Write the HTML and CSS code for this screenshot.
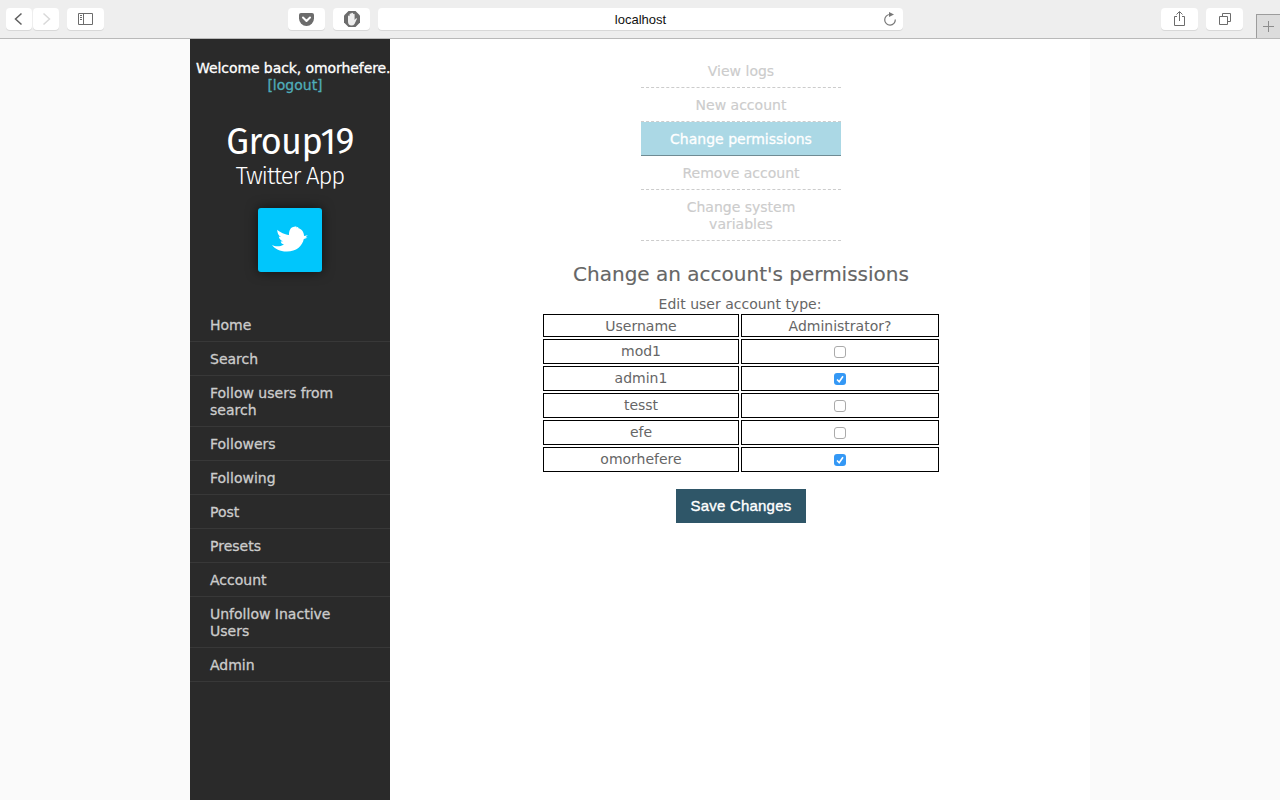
FILE: index.html
```html
<!DOCTYPE html>
<html lang="en">
<head>
<meta charset="utf-8">
<title>Group19 Twitter App</title>
<link rel="stylesheet" href="styles.css">
</head>
<body>
<header class="toolbar">
  <div class="btn nav"><svg width="26" height="22" viewBox="0 0 26 22"><path d="M15.500 5.500 9.500 11l6 5.500" fill="none" stroke="#5f5f5f" stroke-width="1.500"/></svg></div>
  <div class="btn nav forward"><svg width="26" height="22" viewBox="0 0 26 22"><path d="M10.500 5.500l6 5.500-6 5.500" fill="none" stroke="#d9d9d9" stroke-width="1.500"/></svg></div>
  <div class="btn side"><svg width="37" height="22" viewBox="0 0 37 22"><path d="M11.500 5.500h14v11h-14zM16.500 5.500v11M13 7.500h2M13 9.500h2M13 11.500h2" fill="none" stroke="#6c6c6c"/></svg></div>
  <div class="btn pocket"><svg width="37" height="22" viewBox="0 0 37 22"><path d="M13 5h11q2 0 2 2v3.500a7.500 7.500 0 0 1-15 0V7q0-2 2-2z" fill="#6c6c6c"/><path d="M15 9.500l3.500 3.500 3.500-3.500" fill="none" stroke="#fff" stroke-width="2" stroke-linecap="round" stroke-linejoin="round"/></svg></div>
  <div class="btn block"><svg width="37" height="22" viewBox="0 0 37 22"><path d="M15.500 3h7l4.500 4.500v7L22.500 19h-7L11 14.500v-7z" fill="#6c6c6c"/><path d="M15 8.500q0-1 .8-1t.8 1V6.300q0-.8.800-.8t.8.800V5.500q0-.8.900-.8t.9.800V6.500q0-.8.800-.8t.8.800V12l1.200-1.500q1-.8 1.200.2L21.500 16q-1 1.500-3 1.500-3.500 0-3.500-4z" fill="#eee"/></svg></div>
  <div class="address"><span>localhost</span><svg class="reload" width="14" height="14" viewBox="0 0 14 14"><path d="M7 2.500A5.300 5.300 0 1 0 12.300 7.500" fill="none" stroke="#777" stroke-width="1.200"/><path d="M6 0l5 2.600L6 5z" fill="#777"/></svg></div>
  <div class="btn share"><svg width="37" height="22" viewBox="0 0 37 22"><path d="M16 8.500h-2.500v9h10v-9H21M18.500 13V4M15.500 6.500l3-3 3 3" fill="none" stroke="#6c6c6c"/></svg></div>
  <div class="btn tabs"><svg width="37" height="22" viewBox="0 0 37 22"><path d="M13.500 8.500h8v8h-8zM16.500 8V5.500h8v8H22" fill="none" stroke="#6c6c6c"/></svg></div>
  <div class="newtab"><svg width="23" height="23" viewBox="0 0 23 23"><path d="M6 11.500h11M11.500 6v11" stroke="#8c8c8c"/></svg></div>
</header>
<div class="page">
  <aside class="sidebar">
    <p class="welcome"><span class="greeting">Welcome back, omorhefere.</span><a class="logout">[logout]</a></p>
    <h1 class="brand"><span class="brand-name">Group19</span><span class="brand-sub">Twitter App</span></h1>
    <div class="logo"><svg width="36" height="28" viewBox="0 0 36 28"><path d="M0 19C3 20.700 8 21 12 18.500 10 18 9 17 8.700 15.500L11 15.300C8.500 14.500 7 12.500 6.800 10.500L9 11C6.500 9.500 5 6.500 5.300 3.700 9 7 12 8 17 9 17 5 18 2 21 1L24.500.2 24 1.300 26.500 1 26 2C30 3 32 6.500 32 10L35.800 9.300 33.500 11.300 35.500 11.700 31.800 13C30.500 20 24 25.800 14.500 25.600 8 25.500 3 23 0 19z" fill="#fff"/></svg></div>
    <nav class="menu">
      <a><span>Home</span></a>
      <a><span>Search</span></a>
      <a><span>Follow users from<br>search</span></a>
      <a><span>Followers</span></a>
      <a><span>Following</span></a>
      <a><span>Post</span></a>
      <a><span>Presets</span></a>
      <a><span>Account</span></a>
      <a><span>Unfollow Inactive<br>Users</span></a>
      <a><span>Admin</span></a>
    </nav>
  </aside>
  <main class="content">
    <nav class="submenu">
      <a>View logs</a>
      <a>New account</a>
      <a class="active">Change permissions</a>
      <a>Remove account</a>
      <a>Change system<br>variables</a>
    </nav>
    <h2 class="title">Change an account's permissions</h2>
    <p class="caption">Edit user account type:</p>
    <div class="users">
      <div class="head">Username</div><div class="head">Administrator?</div>
      <div class="cell">mod1</div><div class="cell"><i class="check"></i></div>
      <div class="cell">admin1</div><div class="cell"><i class="check on"><svg width="12" height="12" viewBox="0 0 12 12"><path d="M3 6.500l2.200 2.300L9 3.200" fill="none" stroke="#fff" stroke-width="1.600"/></svg></i></div>
      <div class="cell">tesst</div><div class="cell"><i class="check"></i></div>
      <div class="cell">efe</div><div class="cell"><i class="check"></i></div>
      <div class="cell">omorhefere</div><div class="cell"><i class="check on"><svg width="12" height="12" viewBox="0 0 12 12"><path d="M3 6.500l2.200 2.300L9 3.200" fill="none" stroke="#fff" stroke-width="1.600"/></svg></i></div>
    </div>
    <button class="save">Save Changes</button>
  </main>
</div>
</body>
</html>
```
FILE: styles.css
```css
* { box-sizing: border-box; }
body { margin: 0; height: 800px; overflow: hidden; background: #fafafa; color: #666; font: 14px/17px Verdana, "DejaVu Sans", sans-serif; }
svg { display: block; }
.toolbar { display: flex; align-items: flex-start; height: 39px; padding: 8px 0 0 6px; background: #eee; border-bottom: 1px solid #b9b9b9; }
.btn { flex: none; width: 37px; height: 22px; background: #fff; border-radius: 4px; box-shadow: 0 1px 0 #d8d8d8; }
.nav { width: 26px; }
.forward { margin-left: 1px; }
.side { margin-left: 8px; }
.pocket { margin-left: 184px; }
.block { margin-left: 8px; }
.address { position: relative; width: 525px; height: 22px; margin-left: 8px; background: #fff; border-radius: 4px; box-shadow: 0 1px 0 #d8d8d8; text-align: center; color: #111; font: 13px/23px "Liberation Sans", Arial, sans-serif; }
.reload { position: absolute; right: 6px; top: 4px; }
.share { margin-left: 258px; }
.tabs { margin-left: 8px; }
.newtab { width: 24px; height: 24px; margin: 6px 0 0 13px; background: #dcdcdc; border: solid #9c9c9c; border-width: 1px 0 0 1px; }
.page { display: flex; width: 900px; height: 761px; margin: 0 auto; background: #fff; }
.sidebar { width: 200px; background: #2a2a2a; overflow: hidden; }
.welcome { margin: 21px 0 0; display: flex; flex-direction: column; align-items: center; color: #fff; -webkit-text-stroke: .3px; }
.greeting { align-self: flex-start; margin-left: 6px; white-space: nowrap; letter-spacing: -.08px; }
.logout { margin-left: 10px; color: #4fadb9; }
.brand { margin: 29px 0 0; display: flex; flex-direction: column; align-items: center; color: #fff; font-family: "Fira Sans", "Noto Sans", sans-serif; font-weight: 400; }
.brand-name { font-size: 36px; line-height: 38px; letter-spacing: -.6px; }
.brand-sub { font-size: 24px; line-height: 30px; font-weight: 300; letter-spacing: -1.1px; }
.logo { display: flex; align-items: center; justify-content: center; width: 64px; height: 64px; margin: 17px auto 0; background: #00c6fc; border-radius: 3px; box-shadow: 0 0 12px rgba(0,0,0,.6); }
.menu { margin-top: 36px; color: #ccc; -webkit-text-stroke: .3px; }
.menu a { display: block; padding: 9px 20px 7px; border-bottom: 1px solid #383838; }
.content { display: flex; flex-direction: column; align-items: center; width: 700px; padding: 15px 0 0 2px; }
.submenu { width: 200px; text-align: center; color: #ccc; -webkit-text-stroke: .15px; }
.submenu a { display: block; padding: 9px 20px 7px; border-bottom: 1px dashed #ccc; }
.submenu .active { background: #abd8e5; color: #fff; border-bottom: 1px solid #6f8b93; -webkit-text-stroke: .3px; }
.title { margin: 20px 0 0; font-size: 20px; line-height: 26px; font-weight: 400; -webkit-text-stroke: .15px; }
.caption { margin: 9px 2px 1px 0; }
.users { display: grid; grid-template-columns: 196px 198px; gap: 2px; }
.users div { display: flex; justify-content: center; border: 1px solid #000; }
.head { height: 23px; padding-top: 3px; }
.cell { height: 25px; padding-top: 3px; }
.check { width: 12px; height: 12px; margin-top: 3px; border: 1px solid #aaa; border-radius: 3px; background: #fff; }
.check.on { border: 0; background: #3498f5; }
.save { width: 130px; height: 34px; margin-top: 17px; padding: 0; border: 0; background: #2f5668; color: #fff; font: 15px/34px "Liberation Sans", Arial, sans-serif; letter-spacing: .2px; -webkit-text-stroke: .35px; }
```
